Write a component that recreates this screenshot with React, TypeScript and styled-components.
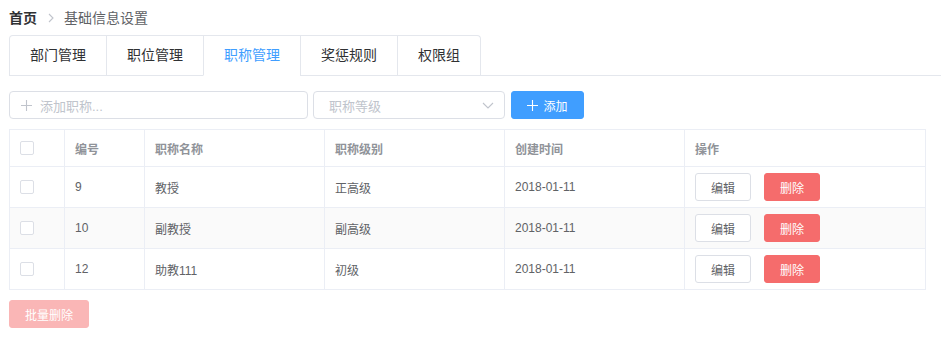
import React from "react";
import styled, { createGlobalStyle } from "styled-components";

const GlobalStyle = createGlobalStyle`
  body {
    margin: 0;
    background: #fff;
    font-family: "Liberation Sans", "Noto Sans CJK SC", sans-serif;
  }
`;

const Page = styled.div`
  padding: 11px 0 0 9px;
`;

const Breadcrumb = styled.div`
  display: flex;
  align-items: center;
  height: 14px;
  font-size: 14px;
  line-height: 14px;
  color: #606266;
`;

const Crumb = styled.span<{ $strong?: boolean }>`
  font-weight: ${(p) => (p.$strong ? 700 : 400)};
  color: ${(p) => (p.$strong ? "#303133" : "#606266")};
`;

const Separator = styled.span`
  display: flex;
  margin: 0 10px 0 11px;
`;

const TabsHeader = styled.div`
  margin-top: 10px;
  border-bottom: 1px solid #e4e7ed;
  display: flex;
`;

const TabsNav = styled.div`
  display: flex;
  border: 1px solid #e4e7ed;
  border-bottom: none;
  border-radius: 4px 4px 0 0;
  margin-bottom: -1px;
`;

const Tab = styled.div<{ $active?: boolean }>`
  height: 39px;
  line-height: 39px;
  padding: 0 20px;
  font-size: 14px;
  color: ${(p) => (p.$active ? "#409eff" : "#303133")};
  border-left: 1px solid #e4e7ed;
  border-bottom: 1px solid ${(p) => (p.$active ? "#fff" : "#e4e7ed")};
  &:first-child {
    border-left: none;
  }
`;

const Toolbar = styled.div`
  display: flex;
  align-items: center;
  gap: 5px;
  margin-top: 15px;
`;

const Field = styled.div<{ $width: number }>`
  box-sizing: border-box;
  width: ${(p) => p.$width}px;
  height: 28px;
  border: 1px solid #dcdfe6;
  border-radius: 4px;
  display: flex;
  align-items: center;
  font-size: 13px;
  color: #c0c4cc;
`;

const InputIcon = styled.span`
  display: flex;
  margin: 0 8px 0 11px;
`;

const SelectText = styled.span`
  flex: 1;
  padding-left: 15px;
`;

const SelectArrow = styled.span`
  display: flex;
  margin-right: 10px;
`;

const PrimaryButton = styled.button`
  box-sizing: border-box;
  margin-left: 1px;
  width: 73px;
  height: 28px;
  border: 1px solid #409eff;
  background: #409eff;
  color: #fff;
  border-radius: 3px;
  font-family: inherit;
  font-size: 12px;
  display: flex;
  align-items: center;
  justify-content: center;
  gap: 5px;
  padding: 0;
`;

const Table = styled.table`
  margin-top: 10px;
  width: 916px;
  border-collapse: collapse;
  table-layout: fixed;
  font-size: 12px;
  color: #606266;
`;

const HeadCell = styled.th`
  height: 36px;
  padding: 0 0 0 10px;
  border: 1px solid #ebeef5;
  text-align: left;
  font-weight: 700;
  color: #909399;
`;

const Row = styled.tr<{ $striped?: boolean }>`
  background: ${(p) => (p.$striped ? "#fafafa" : "#fff")};
`;

const Cell = styled.td`
  height: 40px;
  padding: 0 0 0 10px;
  border: 1px solid #ebeef5;
`;

const Checkbox = styled.span`
  display: block;
  box-sizing: border-box;
  width: 14px;
  height: 14px;
  border: 1px solid #dcdfe6;
  border-radius: 2px;
  background: #fff;
`;

const Actions = styled.div`
  display: flex;
  gap: 13px;
`;

const SmallButton = styled.button<{ $danger?: boolean }>`
  box-sizing: border-box;
  width: 56px;
  height: 28px;
  padding: 0;
  border-radius: 3px;
  font-family: inherit;
  font-size: 12px;
  border: 1px solid ${(p) => (p.$danger ? "#f56c6c" : "#dcdfe6")};
  background: ${(p) => (p.$danger ? "#f56c6c" : "#fff")};
  color: ${(p) => (p.$danger ? "#fff" : "#606266")};
`;

const BatchButton = styled.button`
  box-sizing: border-box;
  margin-top: 10px;
  width: 80px;
  height: 28px;
  padding: 0;
  border: 1px solid #fab6b6;
  background: #fab6b6;
  color: #fff;
  border-radius: 3px;
  font-family: inherit;
  font-size: 12px;
`;

const Plus = ({ color }: { color: string }) => (
  <svg width="11" height="11" viewBox="0 0 11 11">
    <path d="M5.5 0v11M0 5.5h11" stroke={color} strokeWidth="1.1" fill="none" />
  </svg>
);

const tabs = ["部门管理", "职位管理", "职称管理", "奖惩规则", "权限组"];

const rows = [
  { id: "9", name: "教授", level: "正高级", date: "2018-01-11" },
  { id: "10", name: "副教授", level: "副高级", date: "2018-01-11" },
  { id: "12", name: "助教111", level: "初级", date: "2018-01-11" },
];

function App() {
  return (
    <Page>
      <GlobalStyle />
      <Breadcrumb>
        <Crumb $strong>首页</Crumb>
        <Separator>
          <svg width="6" height="10" viewBox="0 0 6 10">
            <path d="M1 1l4 4-4 4" stroke="#c0c4cc" strokeWidth="1.1" fill="none" />
          </svg>
        </Separator>
        <Crumb>基础信息设置</Crumb>
      </Breadcrumb>

      <TabsHeader>
        <TabsNav>
          {tabs.map((t) => (
            <Tab key={t} $active={t === "职称管理"}>
              {t}
            </Tab>
          ))}
        </TabsNav>
      </TabsHeader>

      <Toolbar>
        <Field $width={299}>
          <InputIcon>
            <Plus color="#c0c4cc" />
          </InputIcon>
          添加职称...
        </Field>
        <Field $width={192}>
          <SelectText>职称等级</SelectText>
          <SelectArrow>
            <svg width="12" height="7" viewBox="0 0 12 7">
              <path d="M1 1l5 5 5-5" stroke="#c0c4cc" strokeWidth="1.1" fill="none" />
            </svg>
          </SelectArrow>
        </Field>
        <PrimaryButton>
          <Plus color="#fff" />
          添加
        </PrimaryButton>
      </Toolbar>

      <Table>
        <colgroup>
          <col style={{ width: 55 }} />
          <col style={{ width: 80 }} />
          <col style={{ width: 180 }} />
          <col style={{ width: 180 }} />
          <col style={{ width: 180 }} />
          <col style={{ width: 241 }} />
        </colgroup>
        <thead>
          <tr>
            <HeadCell>
              <Checkbox />
            </HeadCell>
            <HeadCell>编号</HeadCell>
            <HeadCell>职称名称</HeadCell>
            <HeadCell>职称级别</HeadCell>
            <HeadCell>创建时间</HeadCell>
            <HeadCell>操作</HeadCell>
          </tr>
        </thead>
        <tbody>
          {rows.map((r, i) => (
            <Row key={r.id} $striped={i % 2 === 1}>
              <Cell>
                <Checkbox />
              </Cell>
              <Cell>{r.id}</Cell>
              <Cell>{r.name}</Cell>
              <Cell>{r.level}</Cell>
              <Cell>{r.date}</Cell>
              <Cell>
                <Actions>
                  <SmallButton>编辑</SmallButton>
                  <SmallButton $danger>删除</SmallButton>
                </Actions>
              </Cell>
            </Row>
          ))}
        </tbody>
      </Table>

      <BatchButton>批量删除</BatchButton>
    </Page>
  );
}

export default App;
